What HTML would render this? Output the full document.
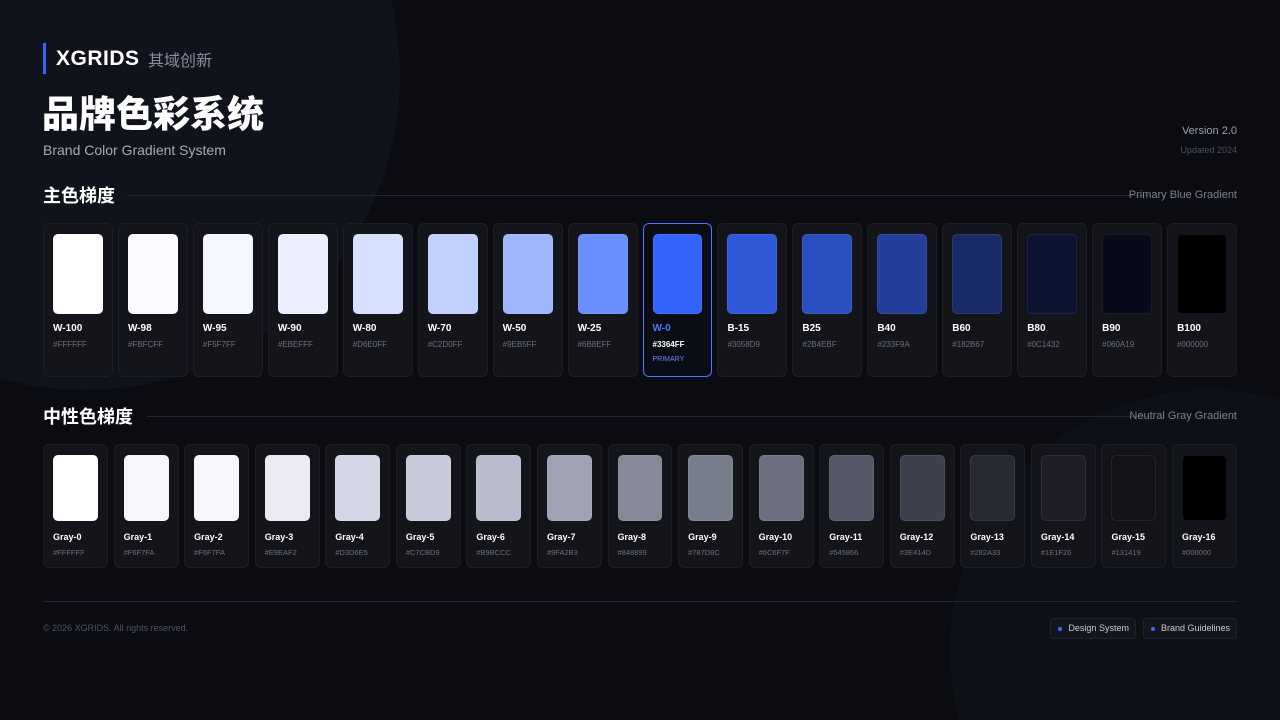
<!DOCTYPE html>
<html><head><meta charset="utf-8"><style>
*{margin:0;padding:0;box-sizing:border-box}
html,body{width:1280px;height:720px;overflow:hidden;background:#0a0c12}
body{font-family:"Liberation Sans","Noto Sans CJK SC",sans-serif;color:#fff}
#w{position:relative;width:1280px;height:720px;overflow:hidden}
.c1{position:absolute;left:-230px;top:-240px;width:630px;height:630px;border-radius:50%;background:#10131c}
.c2{position:absolute;left:950px;top:390px;width:520px;height:520px;border-radius:50%;background:#0d1017}
.abs{position:absolute;white-space:nowrap}
.row{position:absolute;left:43px;width:1194px;display:flex}
.card{flex:1;background:#13151b;border:1px solid #1c1f27;border-radius:6px;position:relative}
.sw{position:absolute;left:9px;right:9px;top:10px;border-radius:5px;border:1px solid rgba(255,255,255,.08)}
.lb{position:absolute;left:9px;font-size:10px;font-weight:bold;color:#fff;white-space:nowrap}
.hx{position:absolute;left:9px;font-size:8px;color:#6b6f7a;white-space:nowrap}
.sec{position:absolute;left:43px;font-size:18px;font-weight:bold;font-family:"Noto Sans CJK SC",sans-serif;line-height:26px}
.line{position:absolute;height:1px;background:#232733}
.secr{position:absolute;right:43px;font-size:11px;color:#7c808b;white-space:nowrap}
.tags{position:absolute;right:43px;top:618px;display:flex;gap:7px}
.tag{position:relative;height:21px;background:#14161d;border:1px solid #20232c;border-radius:3px;font-size:9px;color:#c8cbd3;padding:0 6px 0 17px;line-height:19px;white-space:nowrap}
.tag:before{content:"";position:absolute;left:7px;top:8px;width:4px;height:4px;border-radius:50%;background:#3f6bff}
</style></head><body><div id="w">
<div class="c1"></div><div class="c2"></div>
<div class="abs" style="left:43px;top:43px;width:3px;height:31px;background:#3364ff"></div>
<div class="abs" style="left:56px;top:47px;font-size:21px;font-weight:bold;letter-spacing:.5px">XGRIDS</div>
<div class="abs" style="left:148px;top:48px;font-size:16px;color:#8a8e99;font-family:'Noto Sans CJK SC',sans-serif;line-height:22px">其域创新</div>
<div class="abs" style="left:42px;top:86px;font-size:37px;font-weight:900;font-family:'Noto Sans CJK SC',sans-serif;line-height:50px">品牌色彩系统</div>
<div class="abs" style="left:43px;top:142px;font-size:14px;color:#a6aab3">Brand Color Gradient System</div>
<div class="abs" style="right:43px;top:125px;font-size:11px;color:#9a9ea8">Version 2.0</div>
<div class="abs" style="right:43px;top:145px;font-size:9px;color:#4c505a">Updated 2024</div>

<div class="sec" style="top:182px">主色梯度</div>
<div class="line" style="left:127px;right:130px;top:195px"></div>
<div class="secr" style="top:189px">Primary Blue Gradient</div>
<div class="row" style="top:223px;height:154px;gap:5px" id="r1"></div>

<div class="sec" style="top:403px">中性色梯度</div>
<div class="line" style="left:147px;right:130px;top:416px"></div>
<div class="secr" style="top:410px">Neutral Gray Gradient</div>
<div class="row" style="top:444px;height:124px;gap:5.6px" id="r2"></div>

<div class="line" style="left:43px;right:43px;top:601px"></div>
<div class="abs" style="left:43px;top:623px;font-size:9px;color:#50545e">© 2026 XGRIDS. All rights reserved.</div>
<div class="tags"><div class="tag">Design System</div><div class="tag">Brand Guidelines</div></div>
</div>
<script>
var b=[["W-100","FFFFFF"],["W-98","FBFCFF"],["W-95","F5F7FF"],["W-90","EBEFFF"],["W-80","D6E0FF"],["W-70","C2D0FF"],["W-50","9EB5FF"],["W-25","6B8EFF"],["W-0","3364FF"],["B-15","3058D9"],["B25","2B4EBF"],["B40","233F9A"],["B60","182B67"],["B80","0C1432"],["B90","060A19"],["B100","000000"]];
var h="";b.forEach(function(x){var p=x[0]=="W-0";
h+='<div class="card" style="'+(p?'border:1.5px solid #4a78ff;background:#0b0d14':'')+'"><div class="sw" style="height:80px;background:#'+x[1]+'"></div><div class="lb" style="top:99px;'+(p?'color:#4a78ff':'')+'">'+x[0]+'</div><div class="hx" style="top:116px;'+(p?'color:#fff;font-weight:bold':'')+'">#'+x[1]+'</div>'+(p?'<div class="hx" style="top:132px;font-size:7px;color:#6f8cf0">PRIMARY</div>':'')+'</div>';});
document.getElementById("r1").innerHTML=h;
var g=["FFFFFF","F6F7FA","F6F7FA","E9EAF2","D3D6E5","C7CBD9","B9BCCC","9FA2B3","848899","787D8C","6C6F7F","545866","3E414D","282A33","1E1F26","131419","000000"];
h="";g.forEach(function(c,i){h+='<div class="card"><div class="sw" style="height:66px;background:#'+c+'"></div><div class="lb" style="top:87px;font-size:9px">Gray-'+i+'</div><div class="hx" style="top:103px;font-size:7.5px">#'+c+'</div></div>';});
document.getElementById("r2").innerHTML=h;
</script>
</body></html>
